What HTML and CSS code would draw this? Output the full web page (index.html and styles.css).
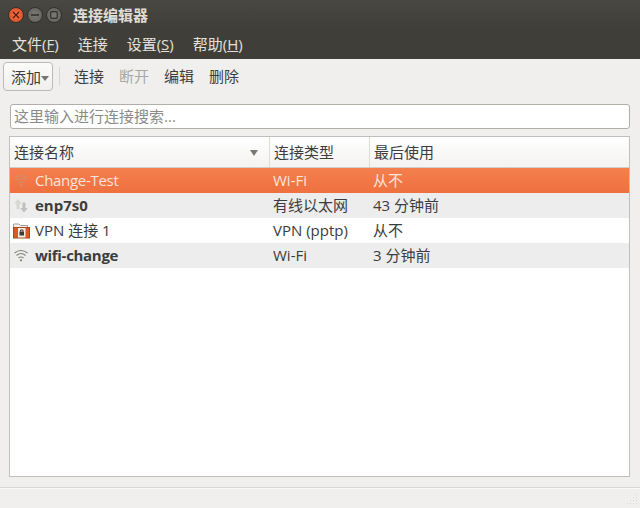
FILE: index.html
```html
<!DOCTYPE html>
<html lang="zh-CN">
<head>
<meta charset="utf-8">
<title>连接编辑器</title>
<link rel="stylesheet" href="styles.css">
</head>
<body>
<div class="window">
  <header class="titlebar">
    <div class="controls">
      <span class="wbtn close"><svg width="8" height="8" viewBox="0 0 8 8"><path d="M1 1l6 6M7 1l-6 6" stroke="#5a1a08" stroke-width="1.300"/></svg></span>
      <span class="wbtn"><svg width="8" height="8" viewBox="0 0 8 8"><path d="M0 4h8" stroke="#33322e" stroke-width="1.600"/></svg></span>
      <span class="wbtn"><svg width="8" height="8" viewBox="0 0 8 8"><rect x=".7" y=".7" width="6.600" height="6.600" rx="1" fill="none" stroke="#33322e" stroke-width="1.200"/></svg></span>
    </div>
    <span class="title">连接编辑器</span>
  </header>
  <nav class="menubar">
    <span>文件(<u>F</u>)</span>
    <span>连接</span>
    <span>设置(<u>S</u>)</span>
    <span>帮助(<u>H</u>)</span>
  </nav>
  <div class="toolbar">
    <button class="add">添加<i class="caret"></i></button>
    <span class="sep"></span>
    <span class="tool">连接</span>
    <span class="tool disabled">断开</span>
    <span class="tool">编辑</span>
    <span class="tool">删除</span>
  </div>
  <div class="search"><div class="search-input">这里输入进行连接搜索...</div></div>
  <div class="table">
    <div class="row head">
      <div class="cell name">连接名称<i class="sort"></i></div>
      <div class="cell type">连接类型</div>
      <div class="cell used">最后使用</div>
    </div>
    <div class="row selected">
      <div class="cell name">
        <svg class="icon" width="16" height="16" viewBox="0 0 16 16" fill="none" stroke="#cf8f72" stroke-width="1.100"><path d="M.5 5Q7 0 13.500 5M2.500 7.500Q7 3.500 11.500 7.500M4.500 10Q7 8 9.500 10"/><circle cx="7" cy="12.300" r="1.100" fill="#cf8f72" stroke="none"/></svg>
        <span class="tight">Change-Test</span>
      </div>
      <div class="cell type">Wi-Fi</div>
      <div class="cell used">从不</div>
    </div>
    <div class="row alt">
      <div class="cell name">
        <svg class="icon" width="16" height="16" viewBox="0 0 16 16"><path d="M4 1l3.800 4.500H5.500v5.500h-3V5.500H.2z" fill="#d6d6d2"/><path d="M10 14.500l-3.800-4.500h2.300V4.500h3V10h2.300z" fill="#c0c0bc"/></svg>
        <b>enp7s0</b>
      </div>
      <div class="cell type">有线以太网</div>
      <div class="cell used">43 分钟前</div>
    </div>
    <div class="row">
      <div class="cell name">
        <svg class="icon vpn" width="17" height="16" viewBox="0 0 17 16"><path d="M.5 12V1h5.500l1.500 1.500h7V5" fill="#f4f2ee" stroke="#a09d98"/><rect x=".5" y="4.500" width="16" height="10.500" fill="#d9592b" stroke="#a84a20"/><rect x="5" y="5" width="7.500" height="9.500" fill="#f1eee8"/><rect x="6.500" y="8.500" width="4.500" height="4" fill="#3c3834"/><path d="M7.500 8.500V7h2.500v1.500" fill="none" stroke="#3c3834"/></svg>
        <span>VPN 连接 1</span>
      </div>
      <div class="cell type">VPN (pptp)</div>
      <div class="cell used">从不</div>
    </div>
    <div class="row alt">
      <div class="cell name">
        <svg class="icon" width="16" height="16" viewBox="0 0 16 16" fill="none" stroke="#81817c" stroke-width="1.100"><path d="M.5 5Q7 0 13.500 5M2.500 7.500Q7 3.500 11.500 7.500M4.500 10Q7 8 9.500 10"/><circle cx="7" cy="12.300" r="1.100" fill="#81817c" stroke="none"/></svg>
        <b class="tight">wifi-change</b>
      </div>
      <div class="cell type">Wi-Fi</div>
      <div class="cell used">3 分钟前</div>
    </div>
  </div>
  <footer class="statusbar">
    <svg class="grip" width="11" height="11" viewBox="0 0 11 11" fill="#dcdad6"><rect x="9" y="0" width="1" height="1"/><rect x="9" y="3" width="1" height="1"/><rect x="6" y="3" width="1" height="1"/><rect x="9" y="6" width="1" height="1"/><rect x="6" y="6" width="1" height="1"/><rect x="3" y="6" width="1" height="1"/><rect x="9" y="9" width="1" height="1"/><rect x="6" y="9" width="1" height="1"/><rect x="3" y="9" width="1" height="1"/><rect x="0" y="9" width="1" height="1"/></svg>
  </footer>
</div>
</body>
</html>
```
FILE: styles.css
```css
* { box-sizing: border-box; }
html, body { margin: 0; padding: 0; }
body {
  width: 640px;
  height: 508px;
  overflow: hidden;
  font-family: "Open Sans", "Noto Sans CJK SC", sans-serif;
  font-size: 15px;
  color: #3c3c3c;
  background: #f0efed;
}
.window { display: flex; flex-direction: column; height: 508px; }
.titlebar {
  height: 30px;
  display: flex;
  align-items: center;
  padding-left: 8px;
  background: linear-gradient(#4a4842, #3e3d38);
}
.controls { display: flex; gap: 3px; width: 65px; }
.wbtn {
  width: 16px;
  height: 16px;
  border-radius: 50%;
  background: radial-gradient(#7c7b75, #5f5e59);
  border: 1px solid #33322e;
  display: flex;
  align-items: center;
  justify-content: center;
}
.wbtn.close { background: radial-gradient(#f0764a, #d8441c); }
.title { color: #e0ddd5; font-weight: 700; line-height: 30px; }
.menubar {
  height: 29px;
  display: flex;
  align-items: center;
  gap: 19px;
  padding: 0 0 2px 12px;
  background: #3f3e39;
  color: #e4e1da;
}
.toolbar {
  height: 37px;
  display: flex;
  align-items: flex-start;
  padding: 3px 0 0 3px;
}
.add {
  width: 50px;
  height: 29px;
  padding: 0 0 0 7px;
  display: flex;
  align-items: center;
  border: 1px solid #bdbab5;
  border-radius: 4px;
  background: linear-gradient(#fbfbfa, #f1f0ee);
  font: inherit;
  color: inherit;
}
.caret {
  margin: 3px 0 0 0;
  border: 4px solid transparent;
  border-top: 5px solid #77756f;
  border-bottom: 0;
}
.sep { width: 1px; height: 19px; margin: 5px 14px 0 6px; background: #d8d6d2; }
.tool { margin-right: 15px; line-height: 29px; }
.tool.disabled { color: #a9a7a2; }
.search { padding: 8px 10px 7px; }
.search-input {
  height: 25px;
  padding-left: 3px;
  line-height: 23px;
  border: 1px solid #b2afa9;
  border-radius: 3px;
  background: #fff;
  color: #8a8a86;
}
.table {
  flex: none;
  height: 341px;
  margin: 0 10px 0 9px;
  border: 1px solid #c3c0bb;
  background: #fff;
}
.row { display: flex; height: 25px; align-items: center; }
.cell { height: 100%; display: flex; align-items: center; flex: none; white-space: nowrap; padding-bottom: 2px; }
.cell.name { width: 259px; padding-left: 4px; }
.cell.type { width: 100px; padding-left: 4px; }
.cell.used { flex: 1; padding-left: 4px; }
.row.head {
  height: 31px;
  border-bottom: 1px solid #d0cec9;
  background: linear-gradient(#ffffff, #f4f3f1);
}
.row.head .cell { position: relative; }
.row.head .cell.name, .row.head .cell.type { border-right: 1px solid #dedcd8; }
.row.head .cell.name { width: 260px; }
.sort {
  position: absolute;
  right: 11px;
  top: 13px;
  border: 4px solid transparent;
  border-top: 6px solid #7b7974;
  border-bottom: 0;
}
.row.selected { background: linear-gradient(#f57f4f, #ee703f); color: #fbe4d9; }
.row.alt { background: #ededed; }
.icon { margin: 2px 5px 0 0; flex: none; }
.icon.vpn { margin-left: -1px; }
.tight { letter-spacing: -0.3px; }
.statusbar {
  flex: 1;
  margin-top: 10px;
  border-top: 1px solid #d8d6d2;
  box-shadow: inset 0 1px 0 #fafaf9;
  display: flex;
  justify-content: flex-end;
  align-items: flex-end;
  padding: 0 2px 3px 0;
}
```
